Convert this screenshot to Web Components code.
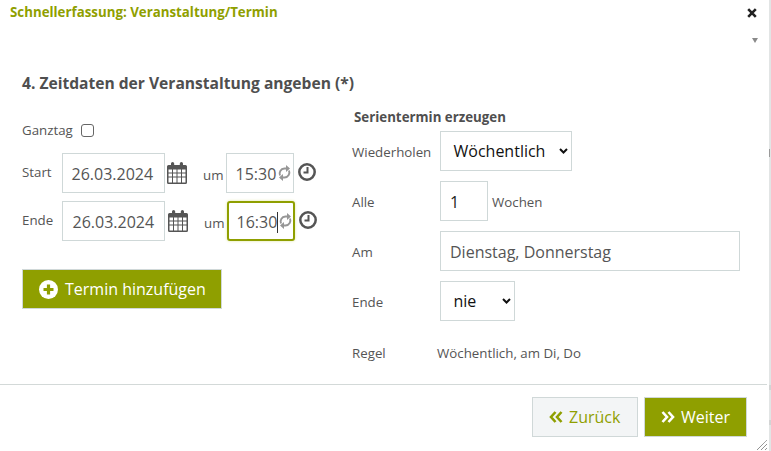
<!DOCTYPE html>
<html lang="de">
<head>
<meta charset="utf-8">
<title>Schnellerfassung</title>
<style>
  html, body { margin: 0; padding: 0; height: 100%; background: #fff; overflow: hidden; }
  body { font-family: "Open Sans", "Liberation Sans", sans-serif; color: #555; }
</style>
</head>
<body>
<quick-dialog></quick-dialog>

<script>
(function () {

  // calendar, refresh and clock are drawn by hand, the original uses an icon font
  const icons = {
    calendar: `<svg width="20" height="22" viewBox="0 0 20 22"><path fill="#555" d="M1.500 3H4V1.600a1.600 1.600 0 0 1 3.200 0V3h5.600V1.600a1.600 1.600 0 0 1 3.200 0V3h2.500A1.500 1.500 0 0 1 20 4.500V20.500A1.500 1.500 0 0 1 18.500 22H1.500A1.500 1.500 0 0 1 0 20.500V4.500A1.500 1.500 0 0 1 1.500 3z"/><path fill="#fff" d="M1.500 7.500h3.500v3H1.500zM6 7.500h3.500v3H6zM10.500 7.500h3.500v3h-3.500zM15 7.500h3.500v3H15zM1.500 11.500h3.500v3H1.500zM6 11.500h3.500v3H6zM10.500 11.500h3.500v3h-3.500zM15 11.500h3.500v3H15zM1.500 15.500h3.500v5H1.500zM6 15.500h3.500v5H6zM10.500 15.500h3.500v5h-3.500zM15 15.500h3.500v5H15z"/></svg>`,
    refresh: `<svg width="13" height="16" viewBox="0 0 13 16"><path fill="none" stroke="#969696" stroke-width="1.900" d="M2 10.500C.8 7.500 2.500 3.800 6.500 3.500h2M11 5.500c1.200 3-.5 6.700-4.500 7h-2"/><path fill="#969696" d="M8 0l4 3.500-4 3.500zM5 9l-4 3.500 4 3.500z"/></svg>`,
    clock: `<svg width="18" height="18" viewBox="0 0 18 18"><circle cx="9" cy="9" r="7.700" fill="none" stroke="#555" stroke-width="2.500"/><path fill="none" stroke="#555" stroke-width="2" d="M9.500 4v5.500H5.500"/></svg>`,
    plus: `<svg width="19" height="19" viewBox="0 0 19 19"><circle cx="9.500" cy="9.500" r="9.500" fill="#fff"/><path fill="none" stroke="#8f9f00" stroke-width="3.200" d="M9.500 4.500v10M4.500 9.500h10"/></svg>`,
    back: `<svg width="14" height="12" viewBox="0 0 14 12"><path fill="none" stroke="#8f9f00" stroke-width="2.600" d="M6.500 1L2 6l4.500 5M12.500 1L8 6l4.500 5"/></svg>`,
    next: `<svg width="14" height="12" viewBox="0 0 14 12"><path fill="none" stroke="#fff" stroke-width="2.600" d="M1.500 1L6 6l-4.500 5M7.500 1L12 6l-4.500 5"/></svg>`
  };

  class FormBox extends HTMLElement {
    constructor() {
      super();
      this.attachShadow({ mode: 'open' });
      const width = this.getAttribute('width') || '100';
      this.shadowRoot.innerHTML = `
        <style>
          :host { box-sizing: border-box; height: 40px; width: ${width}px; flex: none; border: 1px solid #cfd8d8;
            display: flex; align-items: center; background: #fff; color: #555; font-size: 16px; white-space: nowrap; }
          :host([focused]) { border: 2px solid #8f9f00; border-radius: 3px; box-shadow: 0 0 3px #dfe6a0; }
          .inner { display: flex; align-items: center; flex: 1; min-width: 0; }
        </style>
        <div class="inner"><slot></slot></div>
      `;
    }
  }

  class FormSelect extends HTMLElement {
    constructor() {
      super();
      this.attachShadow({ mode: 'open' });
      const width = this.getAttribute('width') || '100';
      this.shadowRoot.innerHTML = `
        <style>
          :host { display: block; box-sizing: border-box; height: 40px; width: ${width}px; flex: none; }
          .box { box-sizing: border-box; width: 100%; height: 40px; border: 1px solid #cfd8d8;
            display: flex; align-items: center; justify-content: space-between;
            padding: 0 3px 0 12.500px; color: #111; font-size: 16px; }
          svg { display: block; }
        </style>
        <div class="box"><span><slot></slot></span>
          <svg width="9" height="6" viewBox="0 0 9 6"><path fill="none" stroke="#111" stroke-width="2" d="M1 1l3.500 3.500L8 1"/></svg>
        </div>
      `;
    }
  }

  class ActionButton extends HTMLElement {
    constructor() {
      super();
      this.attachShadow({ mode: 'open' });
      const pad = this.getAttribute('pad') || '16';
      const gap = this.getAttribute('gap') || '7';
      this.shadowRoot.innerHTML = `
        <style>
          :host { display: inline-flex; box-sizing: border-box; height: 40px; align-items: center;
            padding-left: ${pad}px; gap: ${gap}px; font-size: 16px; border: 1px solid #d0d8d8;
            background: #8f9f00; color: #fff; white-space: nowrap; }
          :host([light]) { background: #f3f5f6; color: #8f9f00; }
          ::slotted([slot=icon]) { display: flex; }
        </style>
        <slot name="icon"></slot><slot></slot>
      `;
    }
  }

  class TimeRow extends HTMLElement {
    constructor() {
      super();
      this.attachShadow({ mode: 'open' });
      const focused = this.hasAttribute('focused');
      this.shadowRoot.innerHTML = `
        <style>
          :host { display: flex; align-items: center; height: 40px; font-size: 13.300px; color: #555; }
          .label { width: 40px; flex: none; padding-bottom: 2px; }
          .date { padding: 2px 0 0 ${focused ? 9.500 : 8.500}px; }
          .cal { margin: 0 0 0 ${focused ? 3 : 2}px; display: flex; }
          .um { margin-left: 16px; width: 23px; padding-top: 3px; flex: none; }
          .time { padding: 2px 0 0 ${focused ? 7.500 : 8.500}px; }
          .caret { display: inline-block; width: 1px; height: 21px; background: #333; vertical-align: -5px; }
          .re { display: flex; margin-left: auto; margin-right: ${focused ? 1 : 2}px; }
          .clock { display: flex; margin: 0 0 2px 4px; }
          .inner { display: flex; align-items: center; width: 100%; }
        </style>
        <span class="label">${this.getAttribute('label')}</span>
        <form-box width="103"><span class="date">${this.getAttribute('date')}</span></form-box>
        <span class="cal">${icons.calendar}</span>
        <span class="um">um</span>
        <form-box width="68" ${focused ? 'focused' : ''}>
          <div class="inner"><span class="time">${this.getAttribute('time')}${focused ? '<i class="caret"></i>' : ''}</span><span class="re">${icons.refresh}</span></div>
        </form-box>
        <span class="clock">${icons.clock}</span>
      `;
    }
  }

  class SerieRow extends HTMLElement {
    constructor() {
      super();
      this.attachShadow({ mode: 'open' });
      this.shadowRoot.innerHTML = `
        <style>
          :host { display: flex; align-items: center; height: 40px; font-size: 13.300px; color: #555; }
          .label { width: 88px; flex: none; padding-top: 2px; }
        </style>
        <span class="label">${this.getAttribute('label')}</span>
        <slot></slot>
      `;
    }
  }

  class QuickDialog extends HTMLElement {
    constructor() {
      super();
      this.attachShadow({ mode: 'open' });
      this.shadowRoot.innerHTML = `
        <style>
          :host { display: flex; flex-direction: column; box-sizing: border-box; width: 771px; height: 451px;
            position: relative; background: #fff; border-right: 2px solid #e2e5e5; padding-right: 2px; }
          header { display: flex; justify-content: space-between; align-items: flex-start; padding: 3px 10px 0 10px; height: 72px; box-sizing: border-box; }
          h1 { margin: 0; font-size: 13.300px; line-height: 18px; font-weight: 700; color: #8f9f00; }
          .close { margin-top: 5px; display: block; }
          .arrow { position: absolute; top: 38px; right: 11px; width: 0; height: 0;
            border: 3px solid transparent; border-top: 5px solid #8a8a8a; border-bottom: 0; }
          main { display: flex; height: 312px; box-sizing: border-box; padding-left: 22px; }
          .left { width: 330px; flex: none; }
          h2 { margin: 0; font-size: 15.600px; line-height: 22px; font-weight: 700; color: #4f4f4f; white-space: nowrap; height: 22px; }
          .ganz { display: flex; align-items: center; font-size: 13.300px; color: #555; margin-top: 26px; height: 20px; margin-bottom: 13px; }
          .check { box-sizing: border-box; width: 13px; height: 13px; border: 1px solid #666; border-radius: 3px; margin-left: 8px; margin-top: 1px; }
          time-row + time-row { margin-top: 8px; }
          .add { margin-top: 28px; width: 200px; }
          .right { flex: 1; padding-top: 36px; }
          h3 { margin: 0 0 5px 2px; font-size: 13.300px; line-height: 18px; font-weight: 700; color: #4f4f4f; }
          serie-row + serie-row { margin-top: 10px; }
          .wo { margin-left: 4px; padding-top: 2px; }
          .regel { height: 20px; margin-top: 22px; display: flex; align-items: center; font-size: 13.300px; color: #555; }
          .regel span:first-child { width: 85px; }
          footer { border-top: 1px solid #d3d9d8; flex: 1; display: flex; justify-content: flex-end; gap: 6px; padding: 12px 20px 0 0; align-items: flex-start; }
          .handle { position: absolute; right: 2px; bottom: 1px; display: block; }
          .val { padding: 2px 0 0 9px; }
          .edge { position: absolute; top: 0; bottom: 0; right: -2px; width: 2px;
            background:
              linear-gradient(#9a9a9a, #9a9a9a) 0 149px / 1px 8px no-repeat,
              linear-gradient(#d2d4d4, #d2d4d4) 0 385px / 2px 5px no-repeat,
              linear-gradient(#d2d4d4, #d2d4d4) 0 420px / 2px 5px no-repeat; }
        </style>
        <header>
          <h1>Schnellerfassung: Veranstaltung/Termin</h1>
          <svg class="close" width="10" height="10" viewBox="0 0 10 10"><path fill="none" stroke="#222" stroke-width="2.600" d="M1.200 1.200l7.600 7.600M8.800 1.200l-7.600 7.600"/></svg>
        </header>
        <span class="arrow"></span>
        <main>
          <section class="left">
            <h2>4. Zeitdaten der Veranstaltung angeben (*)</h2>
            <div class="ganz">Ganztag<span class="check"></span></div>
            <time-row label="Start" date="26.03.2024" time="15:30"></time-row>
            <time-row label="Ende" date="26.03.2024" time="16:30" focused></time-row>
            <action-button class="add" pad="16"><span slot="icon">${icons.plus}</span>Termin hinzufügen</action-button>
          </section>
          <section class="right">
            <h3>Serientermin erzeugen</h3>
            <serie-row label="Wiederholen"><form-select width="132">Wöchentlich</form-select></serie-row>
            <serie-row label="Alle"><form-box width="48"><span class="val" style="color:#222">1</span></form-box><span class="wo">Wochen</span></serie-row>
            <serie-row label="Am"><form-box width="300"><span class="val">Dienstag, Donnerstag</span></form-box></serie-row>
            <serie-row label="Ende"><form-select width="75">nie</form-select></serie-row>
            <div class="regel"><span>Regel</span><span>Wöchentlich, am Di, Do</span></div>
          </section>
        </main>
        <footer>
          <action-button light pad="16" gap="6" style="width:106px"><span slot="icon">${icons.back}</span>Zurück</action-button>
          <action-button pad="16" gap="6" style="width:103px"><span slot="icon">${icons.next}</span>Weiter</action-button>
        </footer>
        <svg class="handle" width="10" height="10" viewBox="0 0 10 10"><path fill="none" stroke="#666" stroke-dasharray="1 0.500" d="M0 10L10 0M4 10l6-6M8 10l2-2"/></svg>
        <span class="edge"></span>
      `;
    }
  }

  customElements.define('form-box', FormBox);
  customElements.define('form-select', FormSelect);
  customElements.define('action-button', ActionButton);
  customElements.define('time-row', TimeRow);
  customElements.define('serie-row', SerieRow);
  customElements.define('quick-dialog', QuickDialog);

})();
</script>
</body>
</html>
